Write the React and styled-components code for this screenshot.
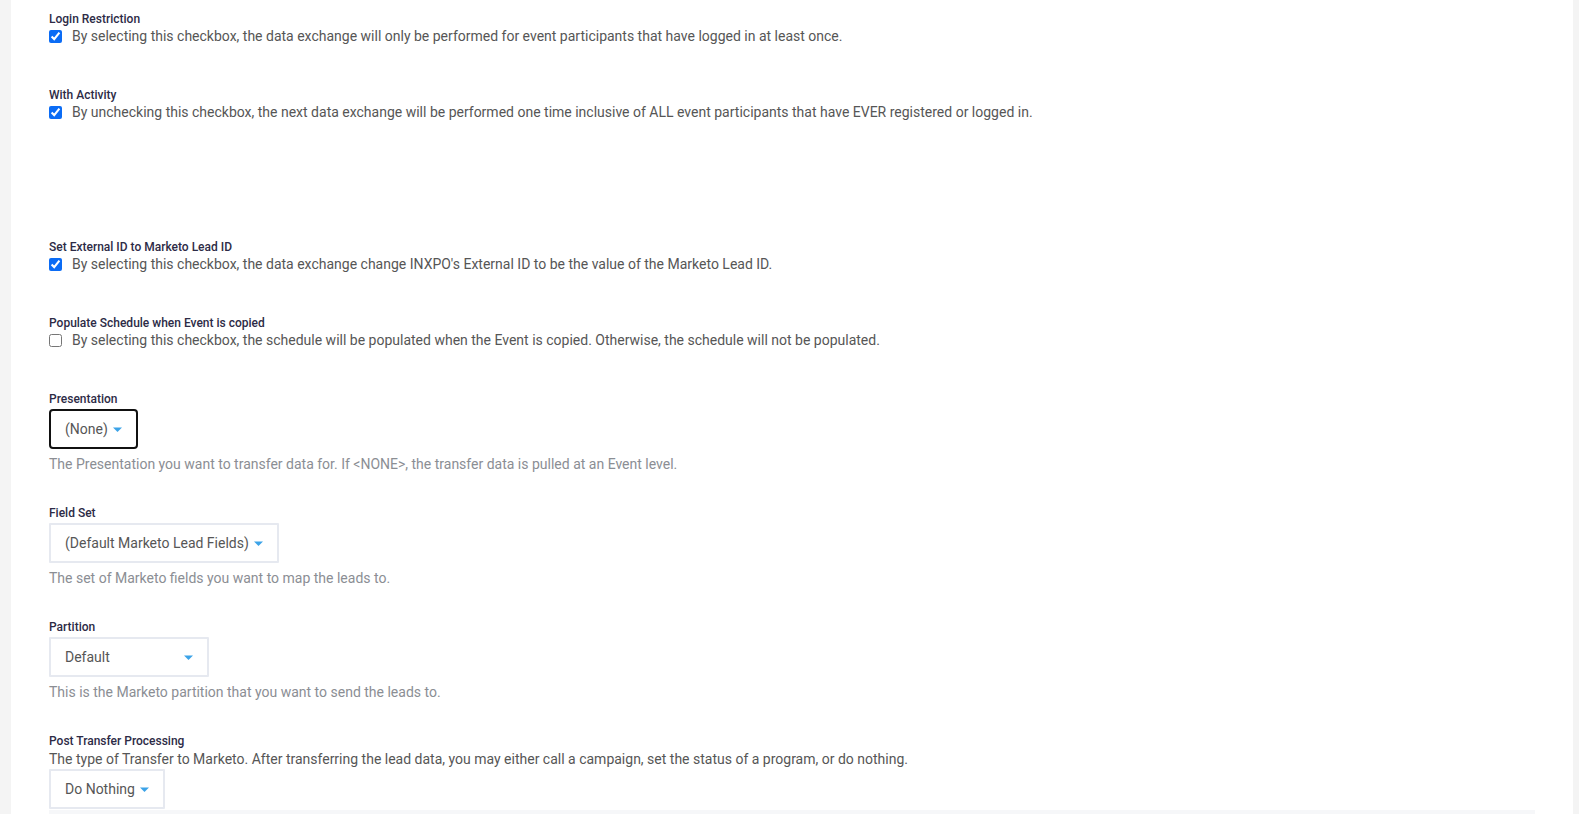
import styled, { createGlobalStyle } from "styled-components";

const GlobalStyle = createGlobalStyle`
html, body {
  margin: 0;
  padding: 0;
  background: #f4f4f4;
  font-family: Roboto, "Liberation Sans", Arial, sans-serif;
}
`

const Panel = styled.main`
margin: 0 6px 0 11px;
background: #fff;
padding: 11px 38px 0;
min-height: 814px;
box-sizing: border-box;
`

const Group = styled.section`
margin-bottom: ${p => p.gap ?? 42}px;
`

const Spacer = styled.div`
height: ${p => p.h}px;
`

const Label = styled.div`
font-size: 12px;
line-height: 16px;
font-weight: 500;
color: #2d2b46;
`

const CheckRow = styled.label`
display: flex;
align-items: center;
font-size: 14px;
line-height: 18px;
color: #565656;
`

const Check = styled.input`
width: 13px;
height: 13px;
margin: 0 10px 0 0;
accent-color: #0b6cf5;
flex-shrink: 0;
`

const Select = styled.div`
display: inline-flex;
align-items: center;
justify-content: space-between;
gap: 5px;
box-sizing: border-box;
height: 40px;
min-width: ${p => p.minWidth || 0}px;
margin-top: ${p => p.top ?? 2}px;
padding: 0 14px;
border: 2px solid ${p => p.focused ? "#111" : "#e6e9f0"};
border-radius: ${p => p.focused ? "4px" : "1px"};
font-size: 14px;
color: #565656;
background: #fff;
`

const Caret = () => (
    <svg width="9" height="5" viewBox="0 0 9 5">
        <path d="M0 0.5h9L4.5 5z" fill="#3ca3e8" />
    </svg>
)

const Hint = styled.div`
margin-top: 5px;
font-size: 14px;
line-height: 20px;
color: #8b8e94;
`

const Desc = styled.div`
font-size: 14px;
line-height: 20px;
color: #565656;
`

const NextSection = styled.div`
margin-top: 1px;
height: 60px;
background: #f6f7f9;
`

const CHECKS = [
    { title: "Login Restriction", checked: true, text: "By selecting this checkbox, the data exchange will only be performed for event participants that have logged in at least once." },
    { title: "With Activity", checked: true, text: "By unchecking this checkbox, the next data exchange will be performed one time inclusive of ALL event participants that have EVER registered or logged in.", after: 76 },
    { title: "Set External ID to Marketo Lead ID", checked: true, text: "By selecting this checkbox, the data exchange change INXPO's External ID to be the value of the Marketo Lead ID." },
    { title: "Populate Schedule when Event is copied", checked: false, text: "By selecting this checkbox, the schedule will be populated when the Event is copied. Otherwise, the schedule will not be populated." },
]

const SELECTS = [
    { title: "Presentation", value: "(None)", focused: true, hint: "The Presentation you want to transfer data for. If <NONE>, the transfer data is pulled at an Event level." },
    { title: "Field Set", value: "(Default Marketo Lead Fields)", hint: "The set of Marketo fields you want to map the leads to." },
    { title: "Partition", value: "Default", minWidth: 160, hint: "This is the Marketo partition that you want to send the leads to." },
]

const App = () => {
    return (
        <>
            <GlobalStyle />
            <Panel>
                {
                    CHECKS.map((it, idx) => (
                        <div key={idx}>
                            <Group>
                                <Label>{it.title}</Label>
                                <CheckRow>
                                    <Check type="checkbox" defaultChecked={it.checked} />
                                    {it.text}
                                </CheckRow>
                            </Group>
                            {it.after && <Spacer h={it.after} />}
                        </div>
                    ))
                }
                {
                    SELECTS.map((it, idx) => (
                        <Group key={idx} gap={31}>
                            <Label>{it.title}</Label>
                            <Select focused={it.focused} minWidth={it.minWidth}>
                                <span>{it.value}</span>
                                <Caret />
                            </Select>
                            <Hint>{it.hint}</Hint>
                        </Group>
                    ))
                }
                <Group gap={0}>
                    <Label>Post Transfer Processing</Label>
                    <Desc>The type of Transfer to Marketo. After transferring the lead data, you may either call a campaign, set the status of a program, or do nothing.</Desc>
                    <Select top={0}>
                        <span>Do Nothing</span>
                        <Caret />
                    </Select>
                </Group>
                <NextSection />
            </Panel>
        </>
    )
}

export default App;
